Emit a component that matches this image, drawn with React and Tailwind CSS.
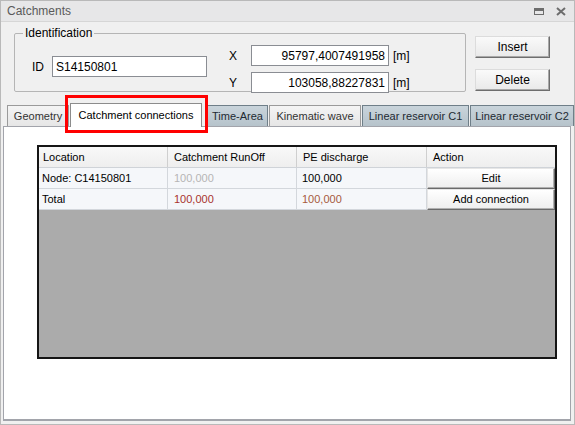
import React from "react";

const tabs = [
  { label: "Geometry", w: "w-[62px]", tone: "light" },
  { label: "Catchment connections", w: "w-[134px]", tone: "active" },
  { label: "Time-Area", w: "w-[61px]", tone: "blue" },
  { label: "Kinematic wave", w: "w-[92px]", tone: "light" },
  { label: "Linear reservoir C1", w: "w-[107px]", tone: "blue" },
  { label: "Linear reservoir C2", w: "w-[104px]", tone: "blue" },
];

function Tab({ label, w, tone, first }) {
  if (tone === "active") {
    return (
      <div
        className={`${w} h-[24px] -mb-px ml-[1px] mr-[4px] relative z-10 bg-white border border-b-0 border-[#8c8c8c] flex items-center justify-center text-black`}
      >
        {label}
      </div>
    );
  }
  const bg =
    tone === "blue"
      ? "bg-gradient-to-b from-[#c9d4db] to-[#b6c3cb] border-[#6f7f89] text-[#1e2a32]"
      : "bg-gradient-to-b from-[#f4f4f4] to-[#e6e6e6] border-[#9a9a9a] text-[#333]";
  return (
    <div
      className={`${w} h-[21px] ${first ? "" : "ml-[1px]"} border border-b-0 ${bg} flex items-center justify-center shrink-0`}
    >
      {label}
    </div>
  );
}

function Field({ value, className, align = "left" }) {
  return (
    <div
      className={`${className} h-[21px] bg-white border border-[#8a8d93] flex items-center px-[3px] ${
        align === "right" ? "justify-end" : ""
      } text-[12px] text-black`}
    >
      {value}
    </div>
  );
}

function WinButton({ children }) {
  return (
    <div className="w-[75px] h-[22px] bg-gradient-to-b from-[#fafafa] to-[#e9e9e9] border border-t-[#dcdcdc] border-l-[#dcdcdc] border-r-[#6e6e6e] border-b-[#6e6e6e] shadow-[inset_-1px_-1px_0_#a8a8a8] flex items-center justify-center text-[12px] text-black">
      {children}
    </div>
  );
}

function CellButton({ children }) {
  return (
    <div className="h-full w-full bg-gradient-to-b from-white to-[#eeeeee] border border-t-[#e6e6e6] border-l-[#e6e6e6] border-r-[#6a6a6a] border-b-[#6a6a6a] shadow-[inset_-1px_-1px_0_#b0b0b0] flex items-center justify-center text-black">
      {children}
    </div>
  );
}

export default function App() {
  return (
    <div className="w-[575px] h-[425px] relative overflow-hidden bg-[#f0f0f0] border border-[#b9b9b9] flex flex-col font-['Liberation_Sans',Arial,sans-serif] text-[11px] leading-none">
      {/* title bar */}
      <div className="h-[21px] shrink-0 bg-[#e7e7e8] border-b border-[#d6d6d6] flex items-center pl-[6px] pr-[8px]">
        <span className="text-[12px] text-[#5a5a5a]">Catchments</span>
        <div className="ml-auto flex items-center gap-[12px]">
          <div className="w-[10px] h-[7px] border border-t-[3px] border-[#6d6d6d]" />
          <svg width="10" height="9" viewBox="0 0 10 9" className="block">
            <path d="M1 1 L9 8 M9 1 L1 8" stroke="#6d6d6d" strokeWidth="2" />
          </svg>
        </div>
      </div>

      {/* identification + actions */}
      <div className="flex pl-[13px] pt-[4px] shrink-0">
        <fieldset className="w-[452px] h-[66px] border border-[#b5b5b5] rounded-[2px] flex items-start">
          <legend className="ml-[8px] px-[2px] text-[12px] leading-[14px] text-black">
            Identification
          </legend>
          <div className="mt-[16px] ml-[17px] flex items-center">
            <span className="w-[20px] text-[12px]">ID</span>
            <Field value="S14150801" className="w-[155px]" />
          </div>
          <div className="mt-[5px] ml-[22px] flex flex-col gap-[6px]">
            <div className="flex items-center">
              <span className="w-[22px] text-[12px]">X</span>
              <Field value="95797,4007491958" className="w-[138px]" align="right" />
              <span className="ml-[4px] text-[12px]">[m]</span>
            </div>
            <div className="flex items-center">
              <span className="w-[22px] text-[12px]">Y</span>
              <Field value="103058,88227831" className="w-[138px]" align="right" />
              <span className="ml-[4px] text-[12px]">[m]</span>
            </div>
          </div>
        </fieldset>
        <div className="ml-[9px] mt-[10px] flex flex-col gap-[11px]">
          <WinButton>Insert</WinButton>
          <WinButton>Delete</WinButton>
        </div>
      </div>

      {/* tab strip */}
      <div className="mt-[11px] h-[23px] shrink-0 flex items-end pl-[6px]">
        {tabs.map((t, i) => (
          <Tab key={t.label} {...t} first={i === 0} />
        ))}
      </div>

      {/* tab page */}
      <div className="ml-[2px] w-[568px] h-[295px] shrink-0 bg-white border border-[#a2a4ab] border-b-2">
        <div className="ml-[33px] mt-[18px] w-[520px] h-[214px] border-2 border-[#151515] bg-[#ababab] flex flex-col">
          <div className="grid grid-cols-[129px_129px_130px_128px] h-[21px] bg-gradient-to-b from-[#f8f8f8] to-[#eeeeee] border-b border-[#cfd3d8]">
            <div className="border-r border-[#cfcfcf] flex items-center pl-[4px]">Location</div>
            <div className="border-r border-[#cfcfcf] flex items-center pl-[6px]">Catchment RunOff</div>
            <div className="border-r border-[#cfcfcf] flex items-center pl-[6px]">PE discharge</div>
            <div className="flex items-center pl-[6px]">Action</div>
          </div>
          <div className="grid grid-cols-[129px_129px_130px_128px] h-[21px] bg-[#f5f7fa] border-b border-[#d3d7dc]">
            <div className="border-r border-[#d3d7dc] flex items-center pl-[3px]">Node: C14150801</div>
            <div className="border-r border-[#d3d7dc] flex items-center pl-[6px] text-[#b5b5b5]">100,000</div>
            <div className="border-r border-[#d3d7dc] flex items-center pl-[5px]">100,000</div>
            <div className="h-[21px]">
              <CellButton>Edit</CellButton>
            </div>
          </div>
          <div className="grid grid-cols-[129px_129px_130px_128px] h-[21px] bg-[#f5f7fa] border-b border-[#d3d7dc]">
            <div className="border-r border-[#d3d7dc] flex items-center pl-[3px]">Total</div>
            <div className="border-r border-[#d3d7dc] flex items-center pl-[6px] text-[#a8322c]">100,000</div>
            <div className="border-r border-[#d3d7dc] flex items-center pl-[5px] text-[#a65a3c]">100,000</div>
            <div className="h-[21px]">
              <CellButton>Add connection</CellButton>
            </div>
          </div>
        </div>
      </div>

      {/* highlight frame over the active tab */}
      <div className="absolute left-[64px] top-[94px] w-[143px] h-[38px] border-[3px] border-[#ff0000] pointer-events-none z-20" />
    </div>
  );
}
